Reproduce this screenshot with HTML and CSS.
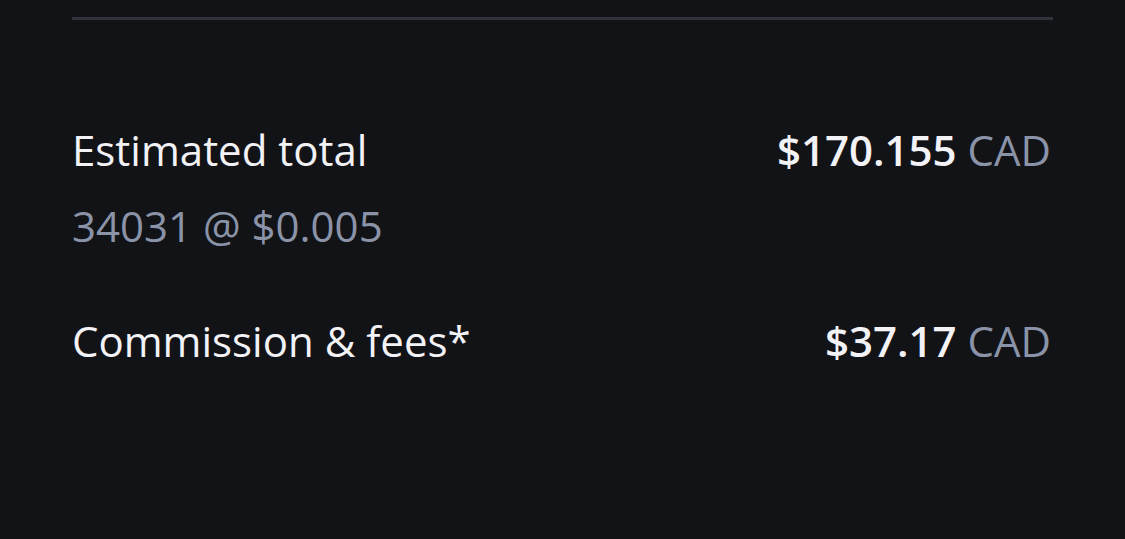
FILE: index.html
```html
<!DOCTYPE html>
<html lang="en">
<head>
<meta charset="utf-8">
<link rel="stylesheet" href="styles.css">
</head>
<body>
<div class="panel">
  <div class="divider"></div>
  <div class="row first">
    <span class="label">Estimated total</span>
    <span class="amount"><b>$170.155</b> <span class="cur">CAD</span></span>
  </div>
  <div class="sub">34031 @ $0.005</div>
  <div class="row second">
    <span class="label">Commission &amp; fees*</span>
    <span class="amount"><b>$37.17</b> <span class="cur">CAD</span></span>
  </div>
</div>
</body>
</html>
```
FILE: styles.css
```css
html, body {
  margin: 0;
  padding: 0;
  background: #121317;
  height: 100%;
  overflow: hidden;
}
body {
  font-family: "Open Sans", "Noto Sans", sans-serif;
  color: #f2f2f7;
}
.panel {
  margin: 0 72px;
  padding-top: 17px;
}
.divider {
  height: 3px;
  background: #2e333b;
}
.row {
  display: flex;
  justify-content: space-between;
  align-items: baseline;
  font-size: 42px;
  line-height: 58px;
  padding-right: 4px;
}
.row .amount {
  margin-right: -2px;
}
.first {
  margin-top: 101px;
}
.second {
  margin-top: 57px;
}
.amount b {
  font-weight: 600;
}
.cur {
  color: #8a93a8;
}
.sub {
  font-size: 42px;
  line-height: 58px;
  color: #8a93a8;
  margin-top: 18px;
}
```
